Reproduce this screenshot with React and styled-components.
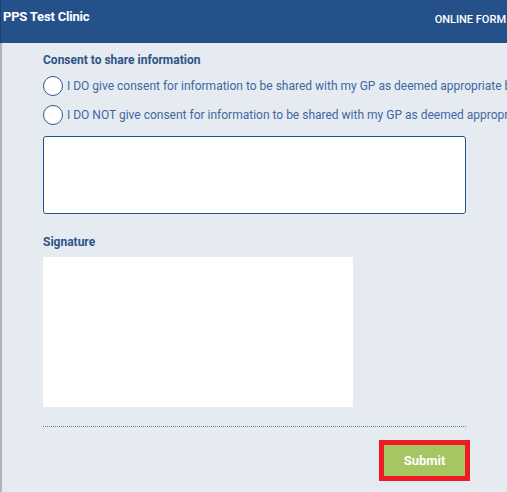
import React from "react";
import styled, { createGlobalStyle } from "styled-components";

const Global = createGlobalStyle`
  html, body { margin: 0; padding: 0; }
  body {
    background: #e6ebf2;
    font-family: Roboto, "Liberation Sans", Arial, sans-serif;
    overflow: hidden;
    width: 507px;
    height: 492px;
  }
`;

const Page = styled.div`
  width: 507px;
  height: 492px;
  display: flex;
  flex-direction: column;
  overflow: hidden;
`;

const Header = styled.header`
  height: 43px;
  flex: none;
  background: #24518a;
  border-left: 1px solid #1c4070;
  display: flex;
  align-items: flex-start;
  justify-content: space-between;
  box-sizing: border-box;
  padding-left: 2px;
  padding-right: 1px;
  color: #fff;
  white-space: nowrap;
`;

const Brand = styled.div`
  font-size: 13px;
  font-weight: 700;
  margin-top: 9px;
  letter-spacing: -0.2px;
`;

const Nav = styled.div`
  font-size: 11px;
  font-weight: 500;
  margin-top: 13px;
`;

const Body = styled.main`
  flex: 1;
  border-left: 2px solid #b1b3b6;
  padding: 9px 0 0 41px;
  display: flex;
  flex-direction: column;
  min-width: 0;
`;

const Form = styled.div`
  width: 423px;
  display: flex;
  flex-direction: column;
`;

const SectionTitle = styled.div`
  font-size: 12px;
  font-weight: 700;
  color: #2d5486;
  line-height: 16px;
`;

const Options = styled.div`
  display: flex;
  flex-direction: column;
  gap: 9px;
  margin-top: 8px;
`;

const Option = styled.label`
  display: flex;
  align-items: center;
  gap: 4px;
  white-space: nowrap;
  font-size: 12px;
  color: #4068a0;
  height: 20px;
`;

const Radio = styled.span`
  flex: none;
  width: 20px;
  height: 20px;
  box-sizing: border-box;
  border: 1.5px solid #2d5790;
  border-radius: 50%;
  background: #fff;
`;

const TextBox = styled.div`
  margin-top: 11px;
  height: 78px;
  box-sizing: border-box;
  border: 1.5px solid #26528c;
  border-radius: 3px;
  background: #fff;
`;

const SignatureTitle = styled(SectionTitle)`
  margin-top: 20px;
`;

const SignaturePad = styled.div`
  margin-top: 7px;
  width: 310px;
  height: 150px;
  background: #fff;
`;

const Divider = styled.div`
  margin-top: 19px;
  border-top: 1px dotted #6b7c94;
`;

const Actions = styled.div`
  display: flex;
  justify-content: flex-end;
  margin-top: 13px;
  margin-right: -4px;
`;

const SubmitButton = styled.button`
  width: 91px;
  height: 41px;
  box-sizing: border-box;
  border: 5px solid #ed1c24;
  background: #a6c663;
  color: #fff;
  font-family: Roboto, "Liberation Sans", Arial, sans-serif;
  font-weight: 700;
  font-size: 13px;
  padding: 0;
  cursor: pointer;
`;

export default function App() {
  return (
    <>
      <Global />
      <Page>
        <Header>
          <Brand>PPS Test Clinic</Brand>
          <Nav>ONLINE FORM</Nav>
        </Header>
        <Body>
          <Form>
            <SectionTitle>Consent to share information</SectionTitle>
            <Options>
              <Option>
                <Radio />
                I DO give consent for information to be shared with my GP as deemed appropriate by my practitioner
              </Option>
              <Option>
                <Radio />
                I DO NOT give consent for information to be shared with my GP as deemed appropriate by my practitioner
              </Option>
            </Options>
            <TextBox />
            <SignatureTitle>Signature</SignatureTitle>
            <SignaturePad />
            <Divider />
            <Actions>
              <SubmitButton>Submit</SubmitButton>
            </Actions>
          </Form>
        </Body>
      </Page>
    </>
  );
}
